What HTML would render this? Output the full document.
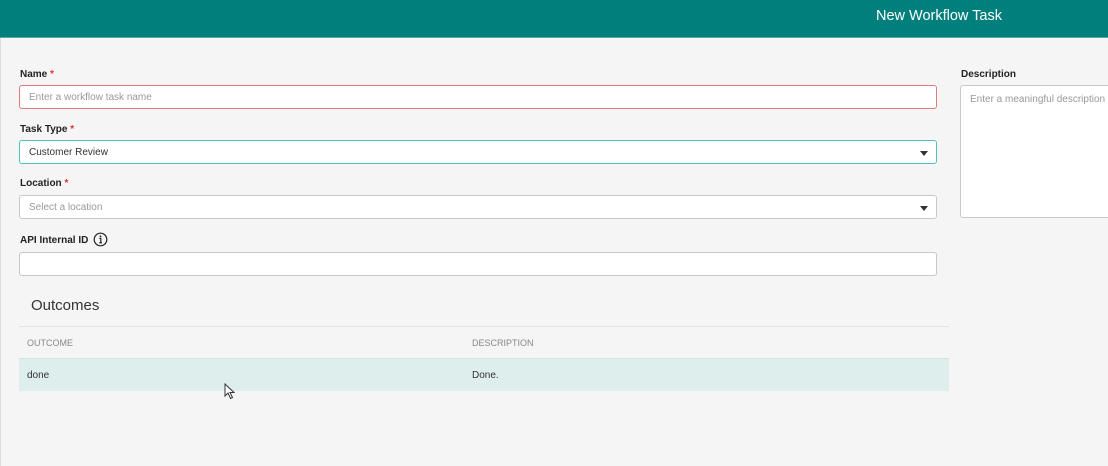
<!DOCTYPE html>
<html><head><style>
*{box-sizing:border-box;margin:0;padding:0}
body{width:1108px;height:466px;background:#f5f5f5;font-family:"Liberation Sans",sans-serif;position:relative;overflow:hidden}
.edge{position:absolute;left:0;top:38px;width:1px;height:428px;background:#ddd}
.hdr{position:absolute;left:0;top:0;width:1108px;height:38px;background:#007f7c;border-bottom:1px solid #5aa}
.hdr span{position:absolute;left:876px;top:8px;color:#fff;font-size:14.5px}
.lbl{position:absolute;font-size:10px;font-weight:bold;color:#222}
.lbl i{color:#d33;font-style:normal}
.in{position:absolute;left:19px;width:918px;height:24px;background:#fff;border:1px solid #c5c9ce;border-radius:3px;font-size:10px;color:#999;padding:6px 0 0 9px}
.car{position:absolute;right:8px;top:10px;width:0;height:0;border-left:4px solid transparent;border-right:4px solid transparent;border-top:5px solid #333}
.th{position:absolute;font-size:9px;color:#888}
.td{position:absolute;font-size:10px;color:#333}
</style></head><body>
<div class="edge"></div>
<div class="hdr"><span>New Workflow Task</span></div>
<div class="lbl" style="left:20px;top:69px">Name <i>*</i></div>
<div class="in" style="top:85px;border-color:#e07a7e">Enter a workflow task name</div>
<div class="lbl" style="left:20px;top:124px">Task Type <i>*</i></div>
<div class="in" style="top:140px;border-color:#4fc4b8;color:#333">Customer Review<div class="car"></div></div>
<div class="lbl" style="left:20px;top:178px">Location <i>*</i></div>
<div class="in" style="top:195px">Select a location<div class="car"></div></div>
<div class="lbl" style="left:20px;top:235px">API Internal ID</div>
<svg style="position:absolute;left:93px;top:232px" width="15" height="15" viewBox="0 0 15 15"><circle cx="7.5" cy="7.5" r="6.3" fill="none" stroke="#222" stroke-width="1.2"/><circle cx="7.5" cy="4.3" r="0.9" fill="#222"/><path d="M6.3 6.3H7.8V10.6M6.2 10.8H9" stroke="#222" stroke-width="1.2" fill="none"/></svg>
<div class="in" style="top:252px"></div>
<div class="lbl" style="left:961px;top:69px">Description</div>
<div style="position:absolute;left:960px;top:85px;width:160px;height:133px;background:#fff;border:1px solid #c5c9ce;border-radius:3px;font-size:10px;color:#999;padding:8px 0 0 9px;white-space:nowrap">Enter a meaningful description</div>
<div style="position:absolute;left:31px;top:297px;font-size:15px;color:#333">Outcomes</div>
<div style="position:absolute;left:19px;top:326px;width:930px;height:1px;background:#e3e3e3"></div>
<div class="th" style="left:27px;top:338px">OUTCOME</div>
<div class="th" style="left:472px;top:338px">DESCRIPTION</div>
<div style="position:absolute;left:19px;top:358px;width:930px;height:33px;background:#deeeed;border-top:1px solid #d3e3e2"></div>
<div class="td" style="left:27px;top:370px">done</div>
<div class="td" style="left:472px;top:370px">Done.</div>
<svg style="position:absolute;left:224px;top:383px" width="12" height="17" viewBox="0 0 12 17"><path d="M1 1V13L4 10L6.5 15.5L8.5 14.5L6 9.5H10Z" fill="#fff" stroke="#333" stroke-width="1"/></svg>
</body></html>
